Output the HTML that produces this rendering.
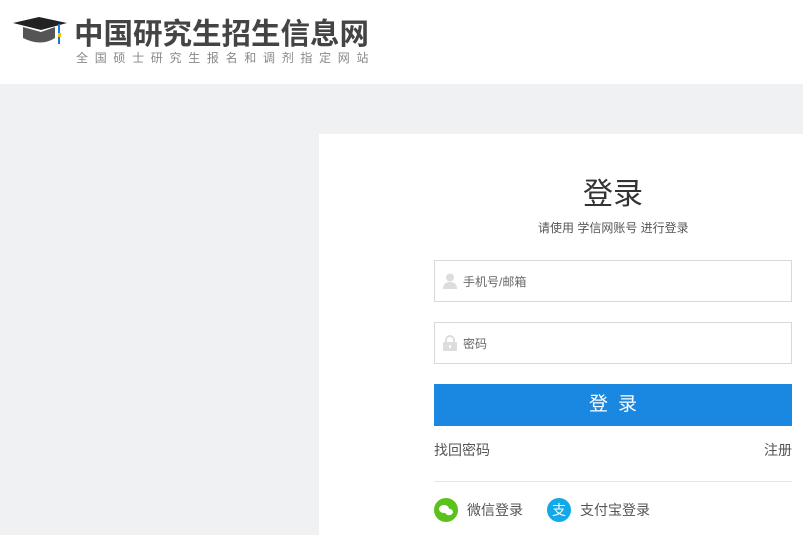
<!DOCTYPE html><html><head><meta charset="utf-8"><style>
*{margin:0;padding:0;box-sizing:border-box}
body{width:803px;height:535px;overflow:hidden;background:#f0f1f3;font-family:"Liberation Sans","Noto Sans CJK SC",sans-serif;position:relative}
.hd{position:absolute;left:0;top:0;width:803px;height:84px;background:#fff}
.t1{position:absolute;left:74px;top:11px;font-size:29.5px;font-weight:bold;color:#444;letter-spacing:0;white-space:nowrap}
.t2{position:absolute;left:76px;top:49px;font-size:12px;color:#888;letter-spacing:6.7px;white-space:nowrap}
.pn{position:absolute;left:319px;top:134px;width:484px;height:401px;background:#fff}
.a{position:absolute;white-space:nowrap}
.in{position:absolute;left:434px;width:358px;height:42px;border:1px solid #d9d9d9;font-size:12px;color:#666;padding:12px 0 0 28px}
.btn{position:absolute;left:434px;top:384px;width:358px;height:42px;background:#1a88e0;color:#fff;font-size:19px;text-align:center;line-height:42px;letter-spacing:10px;text-indent:10px}
</style></head><body>
<div class="hd">
<svg style="position:absolute;left:11px;top:14px" width="60" height="34" viewBox="0 0 60 34">
<polygon points="2,9 28,3 56,9 30,16" fill="#222"/>
<path d="M12,13 L12,24 Q30,33 44,24 L44,13 L30,18 Z" fill="#555"/>
<rect x="47" y="10" width="2" height="20" fill="#1a78d8"/>
<rect x="47" y="19" width="3" height="4" fill="#f5c400"/>
</svg>
<div class="t1">中国研究生招生信息网</div>
<div class="t2">全国硕士研究生报名和调剂指定网站</div>
</div>
<div class="pn"></div>
<div class="a" style="left:583px;top:169px;font-size:30px;color:#333">登录</div>
<div class="a" style="left:538px;top:219px;font-size:12px;color:#555">请使用 学信网账号 进行登录</div>
<div class="in" style="top:260px">手机号/邮箱
<svg style="position:absolute;left:8px;top:12px" width="14" height="16" viewBox="0 0 14 16"><circle cx="7" cy="4.5" r="4" fill="#ddd"/><path d="M0,16 Q0,9 7,9 Q14,9 14,16Z" fill="#ddd"/></svg></div>
<div class="in" style="top:322px">密码
<svg style="position:absolute;left:8px;top:12px" width="14" height="16" viewBox="0 0 14 16"><path d="M3,7 V5 A4,4 0 0 1 11,5 V7" stroke="#ddd" stroke-width="2" fill="none"/><rect x="0" y="7" width="14" height="9" rx="1" fill="#ddd"/><rect x="6" y="10" width="2" height="3" fill="#fff"/></svg></div>
<div class="btn">登录</div>
<div class="a" style="left:434px;top:440px;font-size:14px;color:#555">找回密码</div>
<div class="a" style="left:764px;top:440px;font-size:14px;color:#555">注册</div>
<div class="a" style="left:434px;top:481px;width:358px;height:1px;background:#e5e5e5"></div>
<svg style="position:absolute;left:434px;top:498px" width="24" height="24"><circle cx="12" cy="12" r="12" fill="#5ac21a"/><ellipse cx="10" cy="11" rx="5" ry="4" fill="#fff"/><ellipse cx="15" cy="14" rx="4" ry="3.2" fill="#fff"/></svg>
<div class="a" style="left:467px;top:500px;font-size:14px;color:#555">微信登录</div>
<svg style="position:absolute;left:547px;top:498px" width="24" height="24"><circle cx="12" cy="12" r="12" fill="#13a9e9"/><text x="12" y="17" font-size="14" fill="#fff" text-anchor="middle" font-family="Noto Sans CJK SC">支</text></svg>
<div class="a" style="left:580px;top:500px;font-size:14px;color:#555">支付宝登录</div>
</body></html>
